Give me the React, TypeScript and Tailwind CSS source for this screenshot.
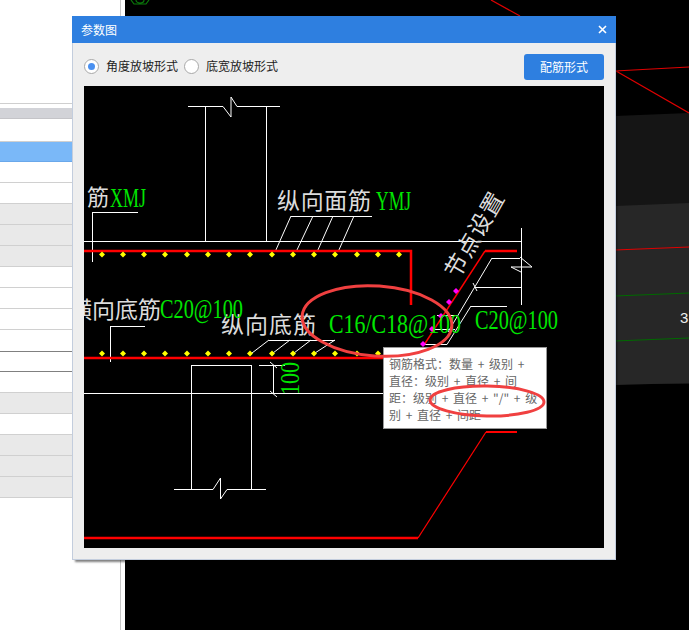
import React from "react";

const cjk = "font-['Noto_Sans_CJK_SC','Liberation_Sans',sans-serif]";
const serif = "font-['Liberation_Serif','Noto_Sans_CJK_SC',serif]";

// left table rows: height, background, bottom line
const rows = [
  { h: 23, bg: "bg-white", line: "border-[#d0d0d0]" },
  { h: 20, bg: "bg-[#7ab8f8]", line: "border-[#6aa8ea]" },
  { h: 21, bg: "bg-white", line: "border-[#d0d0d0]" },
  { h: 21, bg: "bg-white", line: "border-[#d0d0d0]" },
  { h: 21, bg: "bg-[#e9e9e9]", line: "border-[#d0d0d0]" },
  { h: 21, bg: "bg-[#e9e9e9]", line: "border-[#d0d0d0]" },
  { h: 21, bg: "bg-[#e9e9e9]", line: "border-[#d0d0d0]" },
  { h: 21, bg: "bg-white", line: "border-[#d0d0d0]" },
  { h: 21, bg: "bg-white", line: "border-[#d0d0d0]" },
  { h: 21, bg: "bg-white", line: "border-[#d0d0d0]" },
  { h: 22, bg: "bg-white", line: "border-[#808080]" },
  { h: 20, bg: "bg-white", line: "border-[#808080]" },
  { h: 21, bg: "bg-white", line: "border-[#d0d0d0]" },
  { h: 21, bg: "bg-[#e9e9e9]", line: "border-[#d0d0d0]" },
  { h: 21, bg: "bg-white", line: "border-[#d0d0d0]" },
  { h: 21, bg: "bg-[#e9e9e9]", line: "border-[#d0d0d0]" },
  { h: 21, bg: "bg-[#e9e9e9]", line: "border-[#d0d0d0]" },
  { h: 21, bg: "bg-[#e9e9e9]", line: "border-[#d0d0d0]" },
];

const topDots = [102, 123, 144, 165, 187, 208, 229, 250, 272, 293, 314, 335, 357, 378, 399];
const bottomDots = [102, 123, 144, 165, 187, 208, 229, 250, 272, 293, 314, 335, 357, 378];
const pinkDots = [
  [456, 291],
  [449, 302],
  [441, 316],
  [432, 329],
  [423, 344],
];

const whiteLines = [
  "M188 106.5H223L231 117V97L237 106.5H280",
  "M205.5 106V241M266.5 106V241",
  "M84 241.5H522M521.5 228V305",
  "M92 212.5H138M92.5 212V262",
  "M291 216.5H372M291 216L275 252M313 216L296 252M333 216L317 252M354 216L338 252",
  "M269 340.5H335M269 340L252 353M290 340L273 353M311 340L294 353M335 340L315 353",
  "M110 326.5H145M110.5 326V362",
  "M191.5 365V489M251.5 365V489M191 365.5H252",
  "M174 489.5H213L220.5 478V499L227 489.5H266",
  "M259 365.5H285M273.5 365V393M270 362L277 368M270 391L277 397",
  "M84 393.5H383",
  "M492 258.5H520M492 258L448 332M471 306.5H507M471 306L447 344.5H425",
  "M475 287.5H521M473 283L477 291M437 315.5H457M433 329.5H455",
  "M520 257L532 267H511L521 272",
];

function Diamond({ x, y, fill }: { x: number; y: number; fill: string }) {
  return <path d={`M${x} ${y - 3}L${x + 3} ${y}L${x} ${y + 3}L${x - 3} ${y}Z`} fill={fill} />;
}

function Radio({ checked, label }: { checked?: boolean; label: string }) {
  return (
    <label className="flex items-center gap-[7px]">
      <span className="flex h-[15px] w-[15px] items-center justify-center rounded-full border border-[#a8a8a8] bg-white">
        {checked && <span className="h-[7px] w-[7px] rounded-full bg-[#4a90f0]" />}
      </span>
      <span className="text-[12px] leading-none text-[#222]">{label}</span>
    </label>
  );
}

function Drawing() {
  return (
    <svg viewBox="84 86 520 462" className="block h-[462px] w-[520px]">
      <g fill="none" stroke="#fff" strokeWidth="1">
        {whiteLines.map((d) => (
          <path key={d} d={d} />
        ))}
      </g>
      <g fill="none" stroke="#f00">
        <path d="M84 251H411V305" strokeWidth="2.5" />
        <path d="M517 251H485" strokeWidth="2.5" />
        <path d="M485 251L424 345" strokeWidth="1.5" />
        <path d="M84 358H383" strokeWidth="2.5" />
        <path d="M84 538H418" strokeWidth="2.5" />
        <path d="M418 538L486 432" strokeWidth="1.2" />
        <path d="M486 432H517" strokeWidth="2" />
      </g>
      {topDots.map((x) => (
        <Diamond key={x} x={x} y={254.5} fill="#ff0" />
      ))}
      {bottomDots.map((x) => (
        <Diamond key={x} x={x} y={353.5} fill="#ff0" />
      ))}
      {pinkDots.map(([x, y]) => (
        <Diamond key={x} x={x} y={y} fill="#f0f" />
      ))}

      <g fill="#dcdcdc" fontSize="23" className={cjk}>
        <text x="87" y="205" fontSize="22">筋</text>
        <text x="277" y="209" textLength="94">纵向面筋</text>
        <text x="69" y="318" textLength="92">横向底筋</text>
        <text x="221" y="333" textLength="95">纵向底筋</text>
        <text x="476" y="236" textAnchor="middle" dominantBaseline="middle" transform="rotate(-60 476 236)" textLength="94">
          节点设置
        </text>
      </g>
      <g fill="#00e600" fontSize="27" className={serif}>
        <text x="110" y="207" textLength="36" lengthAdjust="spacingAndGlyphs">XMJ</text>
        <text x="376" y="210" textLength="35" lengthAdjust="spacingAndGlyphs">YMJ</text>
        <text x="160" y="318" textLength="83" lengthAdjust="spacingAndGlyphs">C20@100</text>
        <text x="329" y="333" textLength="132" lengthAdjust="spacingAndGlyphs">C16/C18@100</text>
        <text x="475" y="329" textLength="83" lengthAdjust="spacingAndGlyphs">C20@100</text>
        <text x="299" y="395" transform="rotate(-90 299 395)" textLength="33" lengthAdjust="spacingAndGlyphs">100</text>
      </g>
    </svg>
  );
}

function Backdrop() {
  return (
    <svg viewBox="125 0 564 630" className="block h-[630px] w-[564px]">
      <path d="M615 116L689 113V384H615Z" fill="#151515" />
      <path d="M615 206L689 203V383L615 385Z" fill="#272727" />
      <g fill="none" strokeWidth="1.2">
        <path d="M491 0L520 16M615 71L689 67M616 71L689 113M615 250L689 247" stroke="#e00000" />
        <path d="M615 296L689 293M615 341L689 338" stroke="#006a00" />
        <path d="M131 0L134 4H146L149 0M136 0A4 3 0 0 0 144 0" stroke="#0a7a0a" />
      </g>
      <text x="680" y="323" fill="#eee" fontSize="15" className="font-['Liberation_Sans',sans-serif]">3</text>
    </svg>
  );
}

export default function App() {
  return (
    <div className={`relative flex h-[630px] w-[689px] overflow-hidden bg-white ${cjk}`}>
      <div className="w-[120px] shrink-0 pt-[103px]">
        <div className="h-[5px] border-t border-[#cfcfcf]" />
        <div className="h-[11px] border-b border-[#c4c4c8] bg-[#d2d3d8]" />
        {rows.map((r, i) => (
          <div key={i} className={`border-b ${r.bg} ${r.line}`} style={{ height: r.h }} />
        ))}
      </div>
      <div className="w-[5px] shrink-0 border-l border-[#c8c8c8] bg-white" />
      <div className="flex-1 bg-black">
        <Backdrop />
      </div>

      {/* parameter dialog */}
      <div className="absolute left-[72px] top-[16px] h-[544px] w-[544px] border border-t-0 border-[#c3cddd] bg-[#eeeeee] shadow-[2px_3px_2px_-1px_rgba(0,0,0,0.5)]">
        <div className="-mx-px flex h-[27px] items-center justify-between bg-[#2e7fe0] pl-[9px] pr-[9px] text-white">
          <span className="text-[12px]">参数图</span>
          <svg width="9" height="9" viewBox="0 0 9 9" stroke="#fff" strokeWidth="1.6">
            <path d="M1 1L8 8M8 1L1 8" />
          </svg>
        </div>
        <div className="pl-[11px] pr-[11px]">
          <div className="flex h-[43px] items-center justify-between pt-[3px]">
            <div className="flex items-center gap-[6px]">
              <Radio checked label="角度放坡形式" />
              <Radio label="底宽放坡形式" />
            </div>
            <button className="mt-[2px] h-[26px] w-[80px] rounded-[3px] bg-[#2e7fe0] text-[12px] text-white">配筋形式</button>
          </div>
          <div className="relative h-[462px] w-[520px] bg-black">
            <Drawing />
            <div className="absolute left-[299px] top-[261px] h-[82px] w-[164px] whitespace-nowrap border border-[#999] bg-white pl-[5px] pt-[7px] text-[12px] leading-[17px] text-[#666] [word-spacing:2px]">
              钢筋格式：数量 + 级别 +
              <br />
              直径：级别 + 直径 + 间
              <br />
              距：级别 + 直径 + "/" + 级
              <br />
              别 + 直径 + 间距
            </div>
            {/* hand-drawn markup on top of the picture */}
            <svg viewBox="84 86 520 462" className="pointer-events-none absolute left-0 top-0 h-[462px] w-[520px] overflow-visible">
              <g fill="none" stroke="#f04040" strokeWidth="3">
                <ellipse cx="377" cy="321" rx="75" ry="35" transform="rotate(4 377 321)" />
                <ellipse cx="487" cy="401" rx="57" ry="15" transform="rotate(1 487 401)" />
              </g>
            </svg>
          </div>
        </div>
      </div>
    </div>
  );
}
